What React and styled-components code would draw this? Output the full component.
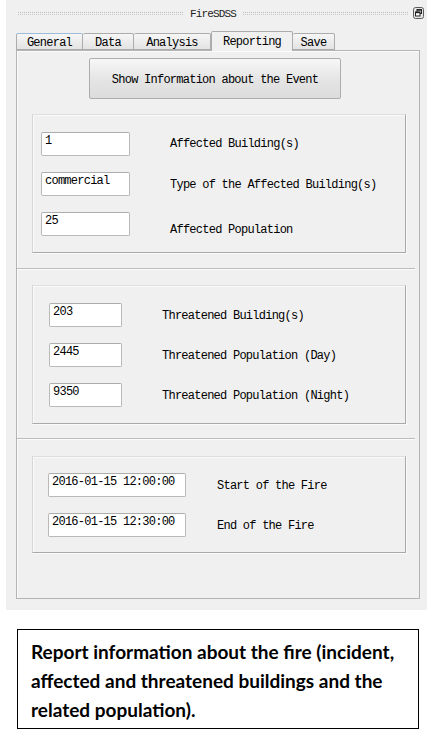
import React from 'react'
import styled, { createGlobalStyle } from 'styled-components'

const GlobalStyle = createGlobalStyle`
    html, body {
        margin: 0;
        padding: 0;
        background: #ffffff;
    }
    * {
        box-sizing: border-box;
    }
`

const tabs = [
    { title: 'General', w: 67 },
    { title: 'Data', w: 51 },
    { title: 'Analysis', w: 77 },
    { title: 'Reporting', w: 82, active: true },
    { title: 'Save', w: 42 },
]

const affected = [
    { value: '1', label: 'Affected Building(s)', shift: 0 },
    { value: 'commercial', label: 'Type of the Affected Building(s)', shift: 2 },
    { value: '25', label: 'Affected Population', shift: 12 },
]

const threatened = [
    { value: '203', label: 'Threatened Building(s)' },
    { value: '2445', label: 'Threatened Population (Day)' },
    { value: '9350', label: 'Threatened Population (Night)' },
]

const times = [
    { value: '2016-01-15 12:00:00', label: 'Start of the Fire' },
    { value: '2016-01-15 12:30:00', label: 'End of the Fire' },
]

const App = () => {
    return (
        <>
            <GlobalStyle />
            <Page>
                <Window>
                    <TitleBar>
                        <Dots />
                        <Title>FireSDSS</Title>
                        <Dots />
                        <FloatButton>
                            <svg width="11" height="12" viewBox="0 0 11 12">
                                <rect x="0.5" y="0.5" width="10" height="11" rx="2" fill="#e6e6e6" stroke="#5a5a5a" />
                                <rect x="4" y="2.5" width="4.5" height="4" fill="none" stroke="#222" />
                                <line x1="4" y1="3" x2="8.5" y2="3" stroke="#222" strokeWidth="1.4" />
                                <rect x="2.5" y="5" width="4.5" height="4" fill="#fff" stroke="#222" />
                                <line x1="2.5" y1="5.5" x2="7" y2="5.5" stroke="#222" strokeWidth="1.4" />
                            </svg>
                        </FloatButton>
                    </TitleBar>

                    <TabBar>
                        {tabs.map((t) => (
                            <Tab key={t.title} w={t.w} active={t.active} first={t.title === 'General'}>
                                {t.title}
                            </Tab>
                        ))}
                    </TabBar>

                    <Panel>
                        <ShowButton>Show Information about the Event</ShowButton>

                        <Group top={15} pad={17} inset={9}>
                            {affected.map((r) => (
                                <Row key={r.label}>
                                    <Field w={89}>{r.value}</Field>
                                    <Label gap={40} shift={r.shift}>{r.label}</Label>
                                </Row>
                            ))}
                        </Group>

                        <Separator top={15} />

                        <Group top={15} pad={17} inset={17}>
                            {threatened.map((r) => (
                                <Row key={r.label}>
                                    <Field w={73}>{r.value}</Field>
                                    <Label gap={40} shift={1}>{r.label}</Label>
                                </Row>
                            ))}
                        </Group>

                        <Separator top={14} />

                        <Group top={16} pad={16} inset={16}>
                            {times.map((r) => (
                                <Row key={r.label}>
                                    <Field w={138}>{r.value}</Field>
                                    <Label gap={31} shift={1}>{r.label}</Label>
                                </Row>
                            ))}
                        </Group>
                    </Panel>
                </Window>

                <Caption>
                    Report information about the fire (incident, affected and threatened buildings and the related population).
                </Caption>
            </Page>
        </>
    )
}

export default App

const Page = styled.div`
    width: 429px;
    min-height: 745px;
    background: #ffffff;
    display: flex;
    flex-direction: column;
`

const Window = styled.div`
    margin-left: 6px;
    width: 421px;
    height: 610px;
    background: #f0f0f0;
    padding: 0 7px 0 10px;
    display: flex;
    flex-direction: column;
    font-family: "Liberation Mono", "DejaVu Sans Mono", monospace;
    font-size: 12px;
    letter-spacing: -0.75px;
    color: #000;
`

const TitleBar = styled.div`
    height: 28px;
    display: flex;
    align-items: center;
    padding: 0 0 1px 2px;
    margin-right: -4px;
`

const Dots = styled.div`
    flex: 1;
    height: 3px;
    border-top: 1px dotted #bdbdbd;
    border-bottom: 1px dotted #c9c9c9;
`

const Title = styled.div`
    font-size: 11px;
    letter-spacing: -0.85px;
    padding: 0 7px;
    color: #222;
`

const FloatButton = styled.div`
    display: flex;
    margin-left: 5px;
    margin-top: -1px;
`

const TabBar = styled.div`
    display: flex;
    align-items: flex-end;
    height: 22px;
    position: relative;
    z-index: 1;
`

const Tab = styled.div`
    width: ${(p) => p.w}px;
    height: ${(p) => (p.active ? 20 : 17)}px;
    margin-bottom: ${(p) => (p.active ? -1 : 0)}px;
    display: flex;
    align-items: center;
    justify-content: center;
    padding-top: ${(p) => (p.active ? 0 : 2)}px;
    border: 1px solid #acacac;
    border-left-width: ${(p) => (p.first || p.active ? 1 : 0)}px;
    border-bottom: ${(p) => (p.active ? 'none' : '1px solid #acacac')};
    border-top-color: ${(p) => (p.first ? '#9dbbd8' : '#acacac')};
    border-radius: 2px 2px 0 0;
    background: ${(p) => (p.active ? '#f0f0f0' : 'linear-gradient(#f6f6f6, #e3e3e3)')};
    font-size: 12px;
    white-space: nowrap;
`

const Panel = styled.div`
    width: 404px;
    height: 549px;
    border: 1px solid #b4b4b4;
    box-shadow: inset 1px 1px 0 #fbfbfb;
    background: #f0f0f0;
    display: flex;
    flex-direction: column;
    padding-top: 7px;
`

const ShowButton = styled.div`
    margin-left: 72px;
    width: 252px;
    height: 41px;
    border: 1px solid #adadad;
    border-radius: 2px;
    background: linear-gradient(#f7f7f7, #e4e4e4 55%, #dcdcdc);
    display: flex;
    align-items: center;
    justify-content: center;
    padding-top: 3px;
    white-space: nowrap;
`

const Group = styled.div`
    margin: ${(p) => p.top}px 13px 0 15px;
    padding: ${(p) => p.pad}px 0 ${(p) => p.pad - 1}px ${(p) => p.inset - 1}px;
    border: 1px solid #a9a9a9;
    border-top-color: #dedede;
    border-left-color: #d6d6d6;
    box-shadow: inset 1px 1px 0 #fafafa, 1px 1px 0 #fafafa;
    display: flex;
    flex-direction: column;
    gap: 16px;
`

const Row = styled.div`
    display: flex;
    align-items: center;
    height: 24px;
`

const Field = styled.div`
    width: ${(p) => p.w}px;
    height: 24px;
    flex-shrink: 0;
    background: #ffffff;
    border: 1px solid #b9b9b9;
    border-top-color: #adadad;
    border-radius: 2px;
    padding: 1px 0 0 3px;
    line-height: 14px;
    white-space: nowrap;
`

const Label = styled.div`
    margin-left: ${(p) => p.gap}px;
    padding-top: ${(p) => p.shift || 0}px;
    white-space: nowrap;
`

const Separator = styled.div`
    margin-top: ${(p) => p.top}px;
    margin-right: 4px;
    height: 2px;
    border-top: 1px solid #bcbcbc;
    border-bottom: 1px solid #fbfbfb;
`

const Caption = styled.div`
    margin: 19px 0 0 17px;
    width: 402px;
    height: 100px;
    border: 1.5px solid #000;
    padding: 7px 8px 0 13px;
    font-family: Lato, "Open Sans", sans-serif;
    font-weight: 700;
    font-size: 19px;
    line-height: 29px;
    color: #000;
`
